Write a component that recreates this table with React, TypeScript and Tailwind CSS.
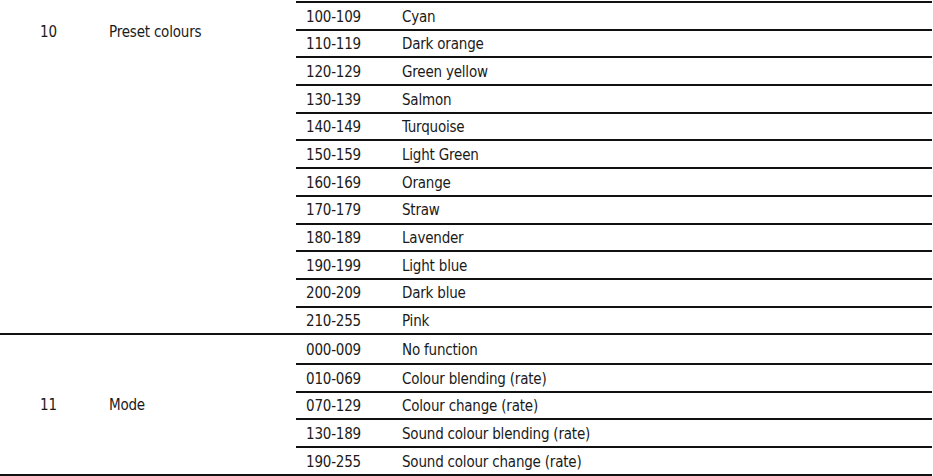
const sections = [
  {
    num: '10',
    name: 'Preset colours',
    top: true,
    rows: [
      ['100-109', 'Cyan'],
      ['110-119', 'Dark orange'],
      ['120-129', 'Green yellow'],
      ['130-139', 'Salmon'],
      ['140-149', 'Turquoise'],
      ['150-159', 'Light Green'],
      ['160-169', 'Orange'],
      ['170-179', 'Straw'],
      ['180-189', 'Lavender'],
      ['190-199', 'Light blue'],
      ['200-209', 'Dark blue'],
      ['210-255', 'Pink'],
    ],
  },
  {
    num: '11',
    name: 'Mode',
    top: false,
    rows: [
      ['000-009', 'No function'],
      ['010-069', 'Colour blending (rate)'],
      ['070-129', 'Colour change (rate)'],
      ['130-189', 'Sound colour blending (rate)'],
      ['190-255', 'Sound colour change (rate)'],
    ],
  },
];

export default function App() {
  return (
    <div
      className="w-[933px] h-[476px] bg-white text-[#1a1a1a] pt-px text-[15px] tracking-[-0.2px] overflow-hidden"
      style={{ fontFamily: '"DejaVu Sans Condensed", Roboto, sans-serif' }}
    >
      {sections.map((s, si) => (
        <div
          key={s.num}
          className={`flex w-[932px] ${si > 0 ? 'border-t-2 border-[#111]' : ''} ${si === sections.length - 1 ? 'border-b-2 border-[#111]' : ''}`}
        >
          <div className={`w-[296px] flex ${s.top ? 'items-start pt-[20px]' : 'items-center pt-[2px]'}`}>
            <div className="w-[97px] text-center">{s.num}</div>
            <div className="pl-[12px]">{s.name}</div>
          </div>
          <div className="flex-1 flex flex-col">
            {s.rows.map(([range, desc], i) => (
              <div
                key={range}
                className={`flex items-center h-[27.7px] ${i > 0 || si === 0 ? 'border-t-2 border-[#111]' : ''}`}
              >
                <div className="w-[106px] pl-[10px] pt-[2px]">{range}</div>
                <div className="pt-[2px]">{desc}</div>
              </div>
            ))}
          </div>
        </div>
      ))}
    </div>
  );
}
